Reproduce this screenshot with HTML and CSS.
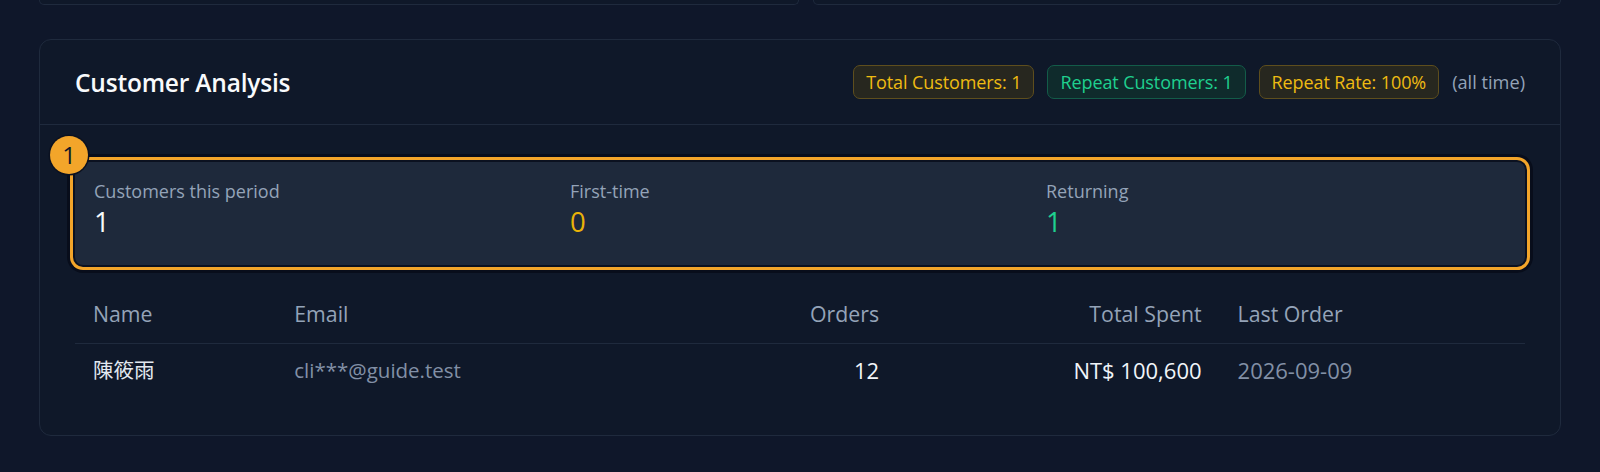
FILE: index.html
```html
<!DOCTYPE html>
<html lang="en">
<head>
<meta charset="utf-8">
<title>Customer Analysis</title>
<link rel="stylesheet" href="styles.css">
</head>
<body>
<div class="page">
  <div class="top-row">
    <div class="top-card"></div>
    <div class="top-card"></div>
  </div>

  <section class="card">
    <header class="card-head">
      <h2 class="card-title">Customer Analysis</h2>
      <div class="pills">
        <span class="pill pill-amber">Total Customers: 1</span>
        <span class="pill pill-green">Repeat Customers: 1</span>
        <span class="pill pill-amber">Repeat Rate: 100%</span>
        <span class="pill-note">(all time)</span>
      </div>
    </header>

    <div class="card-body">
      <div class="stats">
        <span class="step">1</span>
        <div class="stat">
          <div class="stat-label">Customers this period</div>
          <div class="stat-value">1</div>
        </div>
        <div class="stat">
          <div class="stat-label">First-time</div>
          <div class="stat-value amber">0</div>
        </div>
        <div class="stat">
          <div class="stat-label">Returning</div>
          <div class="stat-value green">1</div>
        </div>
      </div>

      <table class="customers">
        <colgroup>
          <col class="c-name">
          <col class="c-email">
          <col class="c-orders">
          <col class="c-total">
          <col class="c-last">
        </colgroup>
        <thead>
          <tr>
            <th>Name</th>
            <th>Email</th>
            <th class="num">Orders</th>
            <th class="num total">Total Spent</th>
            <th>Last Order</th>
          </tr>
        </thead>
        <tbody>
          <tr>
            <td class="name">陳筱雨</td>
            <td class="muted">cli***@guide.test</td>
            <td class="num digits">12</td>
            <td class="num total digits">NT$ 100,600</td>
            <td class="muted digits">2026-09-09</td>
          </tr>
        </tbody>
      </table>
    </div>
  </section>
</div>
</body>
</html>
```

FILE: styles.css
```css
* {
  box-sizing: border-box;
}

html, body {
  margin: 0;
  padding: 0;
  background: #0f172a;
}

body {
  font-family: "Open Sans", "Noto Sans CJK TC", sans-serif;
  color: #f1f5f9;
  height: 472px;
  overflow: hidden;
}

.page {
  padding: 0 39px;
}

.top-row {
  display: grid;
  grid-template-columns: 760px 1fr;
  gap: 14px;
}

.top-card {
  height: 5px;
  border: 1px solid #1f2a3d;
  border-top: 0;
  border-radius: 0 0 12px 12px;
  background: #0f1829;
}

.card {
  margin-top: 34px;
  border: 1px solid #1f2a3d;
  border-radius: 12px;
  background: #0f1829;
}

.card-head {
  height: 85px;
  padding: 0 35px;
  border-bottom: 1px solid #1f2a3d;
  display: flex;
  align-items: center;
  justify-content: space-between;
}

.card-title {
  margin: 0;
  font-size: 24.5px;
  font-weight: 600;
  color: #f8fafc;
  letter-spacing: -0.2px;
}

.pills {
  display: flex;
  align-items: center;
  gap: 13px;
}

.pill {
  height: 34px;
  line-height: 32px;
  padding: 0 12px;
  border-radius: 7px;
  border: 1px solid;
  font-size: 18px;
  letter-spacing: -0.1px;
  white-space: nowrap;
}

.pill-amber {
  color: #efbb12;
  background: #27271f;
  border-color: #5e4e1d;
}

.pill-green {
  color: #1fd08f;
  background: #0f2b2c;
  border-color: #135c49;
}

.pill-note {
  color: #94a3b8;
  font-size: 18.2px;
}

.card-body {
  padding: 37px 35px 39px;
}

.stats {
  position: relative;
  display: grid;
  grid-template-columns: repeat(3, 1fr);
  gap: 16px;
  padding: 17px 19px 0;
  height: 103px;
  background: #1e293b;
  border-radius: 8px;
  box-shadow: 0 0 0 2px #0b1120, 0 0 0 5px #f3a52a, 0 0 0 8px rgba(3, 7, 18, 0.6);
}

.step {
  position: absolute;
  left: -25px;
  top: -26px;
  width: 38px;
  height: 38px;
  border-radius: 50%;
  background: #f3a52a;
  box-shadow: 0 0 0 1.5px #0b1120;
  color: #111827;
  font-size: 24px;
  font-weight: 500;
  line-height: 38px;
  text-align: center;
}

.stat-label {
  font-size: 18px;
  line-height: 24px;
  color: #94a3b8;
}

.stat-value {
  font-size: 27.5px;
  font-weight: 500;
  line-height: 38px;
  color: #f8fafc;
}

.stat-value.amber {
  color: #eab308;
}

.stat-value.green {
  color: #1fd08f;
}

.customers {
  width: 100%;
  margin-top: 20px;
  border-collapse: collapse;
  table-layout: fixed;
  font-size: 20.5px;
}

.c-name { width: 203px; }
.c-email { width: 400px; }
.c-orders { width: 216px; }
.c-total { width: 326px; }
.c-last { width: 303px; }

.customers th {
  padding: 16px 16px;
  line-height: 26px;
  font-weight: 400;
  font-size: 21.3px;
  color: #94a3b8;
  text-align: left;
  border-bottom: 1px solid #1f2a3d;
}

.customers td {
  padding: 13px 16px;
  line-height: 26px;
  color: #f1f5f9;
}

.customers td.digits {
  font-size: 22px;
}

.customers th:first-child,
.customers td:first-child {
  padding-left: 18px;
}

.customers .num {
  text-align: right;
}

.customers .total {
  padding-right: 20px;
}

.customers td.name {
  color: #e2e8f0;
}

.customers td.muted {
  color: #8290a6;
}
```
